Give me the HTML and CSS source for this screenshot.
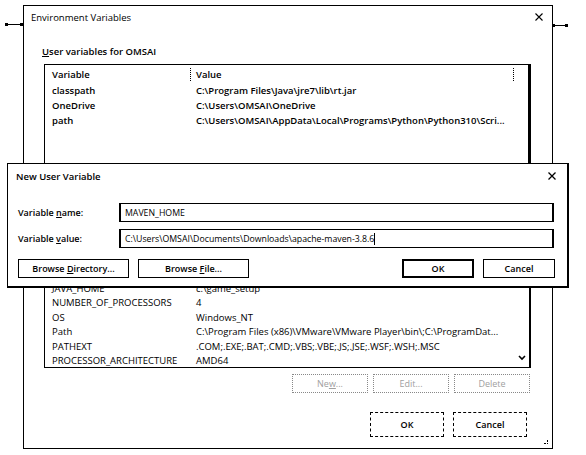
FILE: index.html
```html
<!DOCTYPE html>
<html>
<head>
<meta charset="utf-8">
<link rel="stylesheet" href="styles.css">
</head>
<body>
<div class="desk">
  <span class="handle handle-left"></span>
  <span class="handle handle-right"></span>

  <div class="env">
    <div class="titlebar">
      <span class="title-text thin">Environment Variables</span>
      <svg class="close" width="8" height="8" viewBox="0 0 8 8"><path d="M0.5 0.5 L7.5 7.5 M7.5 0.5 L0.5 7.5" stroke="#000" stroke-width="1.1" fill="none"/></svg>
    </div>
    <div class="env-body">
      <div class="section-label heavy"><u>U</u>ser variables for OMSAI</div>
      <div class="list list-user heavy">
        <div class="list-head">
          <span class="head-var">Variable</span>
          <span class="head-val">Value</span>
        </div>
        <div class="row"><span>classpath</span><span>C:\Program Files\Java\jre7\lib\rt.jar</span></div>
        <div class="row"><span>OneDrive</span><span>C:\Users\OMSAI\OneDrive</span></div>
        <div class="row"><span>path</span><span>C:\Users\OMSAI\AppData\Local\Programs\Python\Python310\Scri...</span></div>
      </div>
      <div class="hidden-gap"></div>
      <div class="list list-sys">
        <div class="sys-rows">
          <div class="row row-blank"></div>
          <div class="row row-blank"></div>
          <div class="row"><span>JAVA_HOME</span><span>c:\game_setup</span></div>
          <div class="row"><span>NUMBER_OF_PROCESSORS</span><span>4</span></div>
          <div class="row"><span>OS</span><span>Windows_NT</span></div>
          <div class="row"><span>Path</span><span>C:\Program Files (x86)\VMware\VMware Player\bin\;C:\ProgramDat...</span></div>
          <div class="row"><span>PATHEXT</span><span>.COM;.EXE;.BAT;.CMD;.VBS;.VBE;.JS;.JSE;.WSF;.WSH;.MSC</span></div>
          <div class="row"><span>PROCESSOR_ARCHITECTURE</span><span>AMD64</span></div>
        </div>
        <div class="scrollbar">
          <svg width="8" height="6" viewBox="0 0 8 6"><path d="M1 1 L4 4 L7 1" stroke="#000" stroke-width="1.6" fill="none"/></svg>
        </div>
      </div>
      <div class="sys-buttons">
        <span class="btn-dis"><span>Ne<u>w</u>...</span></span>
        <span class="btn-dis"><span>Edit...</span></span>
        <span class="btn-dis"><span>Delete</span></span>
      </div>
      <div class="env-footer">
        <span class="btn-dash heavy"><span>OK</span></span>
        <span class="btn-dash heavy"><span>Cancel</span></span>
      </div>
    </div>
    <span class="grip"></span>
  </div>

  <div class="dialog heavy">
    <div class="dlg-title">
      <span>New User Variable</span>
      <svg class="close" width="8" height="8" viewBox="0 0 8 8"><path d="M0.5 0.5 L7.5 7.5 M7.5 0.5 L0.5 7.5" stroke="#000" stroke-width="1.3" fill="none"/></svg>
    </div>
    <div class="dlg-body">
      <div class="field">
        <span class="field-label">Variable <u>n</u>ame:</span>
        <span class="field-input"><span>MAVEN_HOME</span></span>
      </div>
      <div class="field">
        <span class="field-label">Variable <u>v</u>alue:</span>
        <span class="field-input"><span>C:\Users\OMSAI\Documents\Downloads\apache-maven-3.8.6</span><span class="caret"></span></span>
      </div>
      <div class="dlg-buttons">
        <span class="btn btn-wide"><span>Browse <u>D</u>irectory...</span></span>
        <span class="btn btn-wide"><span>Browse <u>F</u>ile...</span></span>
        <span class="spacer"></span>
        <span class="btn btn-small btn-default"><span>OK</span></span>
        <span class="btn btn-small"><span>Cancel</span></span>
      </div>
    </div>
  </div>
</div>
</body>
</html>
```
FILE: styles.css
```css
* { box-sizing: border-box; }
html, body { margin: 0; padding: 0; background: #fff; }
body {
  font-family: "Open Sans", "Noto Sans", sans-serif;
  font-size: 9px;
  color: #000;
}
u { text-decoration: underline; text-underline-offset: 1px; }
.heavy { font-weight: 600; }
.thin { font-weight: 400; }

.desk {
  position: relative;
  width: 586px;
  height: 455px;
  overflow: hidden;
  background: #fff;
}

/* selection handles of the pasted picture */
.handle {
  position: absolute;
  height: 1px;
  background: #000;
}
.handle::before, .handle::after {
  content: "";
  position: absolute;
  top: -1px;
  width: 3px;
  height: 3px;
  background: #000;
}
.handle::before { left: 0; }
.handle::after { right: 0; }
.handle-left { left: 5px; top: 24px; width: 18px; }
.handle-right { left: 552px; top: 25px; width: 16px; }

/* main window */
.env {
  position: absolute;
  left: 23px;
  top: 5px;
  width: 530px;
  height: 444px;
  border: 1px solid #000;
  background: #fff;
  display: flex;
  flex-direction: column;
}
.titlebar {
  height: 22px;
  display: flex;
  align-items: center;
  justify-content: space-between;
  padding: 0 9px 0 7px;
  font-size: 9.5px;
}
.env-body {
  display: flex;
  flex-direction: column;
  padding-left: 18px;
  padding-top: 18px;
}
.section-label { height: 12px; line-height: 12px; font-size: 9.5px; }
.list {
  margin-left: 2px;
  width: 487px;
  border: 1px solid #000;
  overflow: hidden;
  font-size: 9.5px;
}
.list-user {
  margin-top: 6px;
  height: 150px;
  border-right-width: 3px;
}
.list-head {
  height: 18px;
  display: flex;
  align-items: center;
  padding-left: 7px;
}
.head-var {
  width: 139px;
  border-right: 1px dotted #000;
  line-height: 13px;
}
.head-val {
  width: 323px;
  padding-left: 5px;
  border-right: 1px dotted #000;
  line-height: 13px;
}
.row {
  height: 15px;
  display: grid;
  grid-template-columns: 144px 1fr;
  align-items: center;
  padding-left: 7px;
  white-space: nowrap;
}
.hidden-gap { height: 36px; }
.list-sys {
  height: 118px;
  display: flex;
  border-right-width: 2px;
}
.sys-rows { flex: 1; padding-top: 1px; }
.sys-rows .row { height: 14.5px; }
.scrollbar {
  width: 15px;
  display: flex;
  align-items: flex-end;
  justify-content: center;
  padding-bottom: 6px;
}
.sys-buttons {
  margin-top: 6px;
  padding-left: 250px;
  display: flex;
  gap: 5px;
  height: 19px;
}
.btn-dis {
  width: 76px;
  border: 1px dotted #888;
  color: #a0a0a0;
  display: flex;
  align-items: center;
  justify-content: center;
}
.env-footer {
  margin-top: 19px;
  padding-left: 328px;
  display: flex;
  gap: 9px;
}
.btn-dash {
  width: 74px;
  height: 25px;
  border: 1px dashed #000;
  display: flex;
  align-items: center;
  justify-content: center;
}
.grip {
  position: absolute;
  right: 4px;
  bottom: 4px;
  width: 4px;
  height: 4px;
  border-right: 1px dotted #000;
  border-bottom: 1px dotted #000;
}

/* dialog */
.dialog {
  position: absolute;
  left: 7px;
  top: 163px;
  width: 562px;
  height: 125px;
  border: 1px solid #000;
  border-right-width: 2px;
  border-bottom-width: 2px;
  background: #fff;
}
.dlg-title {
  height: 24px;
  display: flex;
  align-items: center;
  justify-content: space-between;
  padding: 0 11px 0 8px;
  font-size: 9.5px;
}
.dlg-body {
  padding: 15px 12px 0 10px;
  display: flex;
  flex-direction: column;
  gap: 7px;
}
.field { display: flex; align-items: center; height: 19px; }
.field-label { width: 101px; }
.field-input {
  width: 435px;
  height: 19px;
  border: 1px solid #000;
  border-left-width: 2px;
  border-right-width: 2px;
  padding-left: 4px;
  display: flex;
  align-items: center;
  white-space: nowrap;
  font-weight: 500;
  font-size: 8.75px;
}
.caret {
  display: inline-block;
  width: 1px;
  height: 12px;
  background: #000;
}
.dlg-buttons {
  margin-top: 4px;
  display: flex;
  gap: 9px;
}
.spacer { flex: 1; }
.btn {
  height: 19px;
  border: 1px solid #000;
  display: flex;
  align-items: center;
  justify-content: center;
}
.btn-wide { width: 111px; }
.btn-small { width: 72px; }
.btn-default { border-width: 2px; }
```
